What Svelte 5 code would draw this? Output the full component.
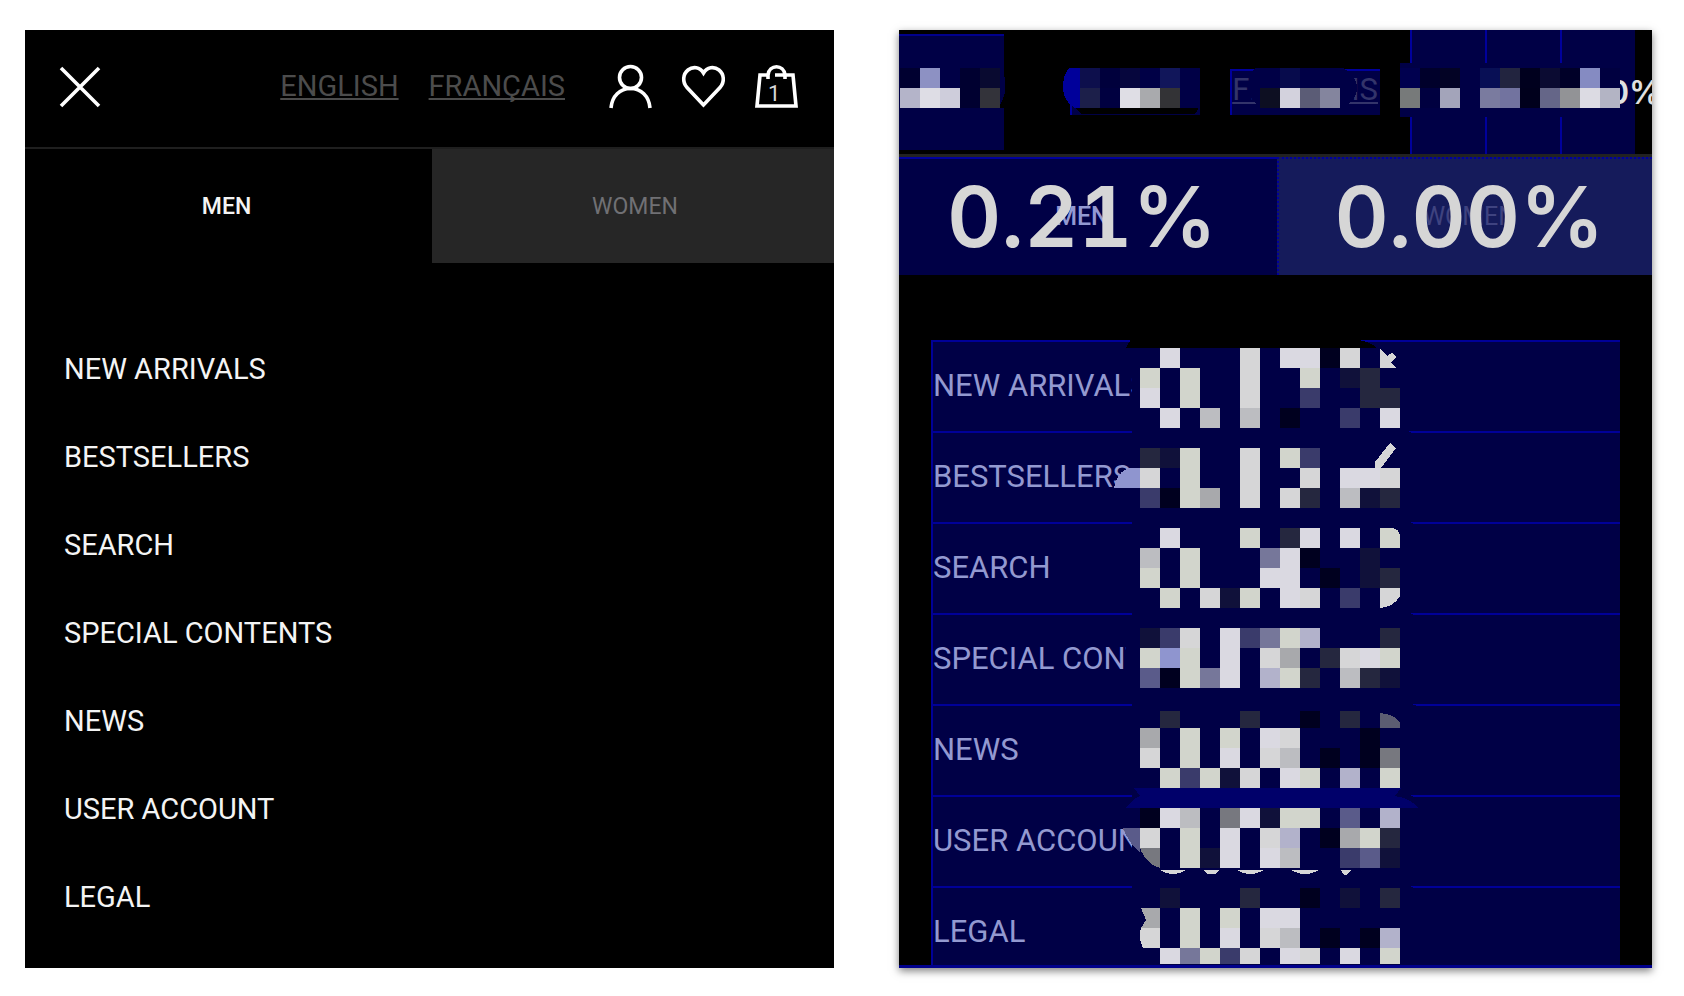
<script lang="ts">
	const links = ['NEW ARRIVALS', 'BESTSELLERS', 'SEARCH', 'SPECIAL CONTENTS', 'NEWS', 'USER ACCOUNT', 'LEGAL'];

	const CELL = 20;

	const palette: Record<string, string> = {
		W: '#dad9e1',
		G: '#d2d5cc',
		L: '#d6d6d7',
		S: '#bcbdc1',
		b: '#b2b2cb',
		a: '#a8a9ac',
		h: '#77787f',
		v: '#8f95cf',
		m: '#76779a',
		q: '#5a5b8a',
		p: '#3a3b6b',
		d: '#25273f',
		k: '#10113a',
		n: '#00001f'
	};

	// pixelated heat figures, 13 cells wide, one entry per cell row
	const rows = [
		{ y: 318, h: 20, cells: '.W...L.WWnL..' },
		{ y: 338, h: 20, cells: 'G.G..L..G.kd.' },
		{ y: 358, h: 20, cells: 'W.G..L..p..dd' },
		{ y: 378, h: 20, cells: '.W.S.S.n..p.W' },
		{ y: 418, h: 20, cells: 'dkG..L.Gp....' },
		{ y: 438, h: 20, cells: 'L.G..L..L.WWL' },
		{ y: 458, h: 20, cells: 'pnGa.L.Ld.Skd' },
		{ y: 498, h: 20, cells: '.W...G.dW.W..' },
		{ y: 518, h: 20, cells: 'S.G...mWn..k.' },
		{ y: 538, h: 20, cells: 'G.G...WW.n.kd' },
		{ y: 558, h: 20, cells: '.G.LkG.WL.p..' },
		{ y: 598, h: 20, cells: 'kpL.WpmGb...d' },
		{ y: 618, h: 20, cells: 'GvG.W.La.dLWG' },
		{ y: 638, h: 20, cells: 'qnGmW.bGd.Sdk' },
		{ y: 681, h: 17, cells: '.d...d..n.d..' },
		{ y: 698, h: 20, cells: 'a.G.G.WL...n.' },
		{ y: 718, h: 20, cells: 'L.G.W.LS.n.nh' },
		{ y: 738, h: 20, cells: '.GpGkL.WG.b.G' },
		{ y: 778, h: 20, cells: 'nWS.hWkGG.q.b' },
		{ y: 798, h: 20, cells: 'L.G.W.Lb.naGd' },
		{ y: 818, h: 20, cells: '..GkW.WS..pqk' },
		{ y: 858, h: 20, cells: '.k...d..n.k.d' },
		{ y: 878, h: 20, cells: '..G.G.WW.....' },
		{ y: 898, h: 20, cells: '..G.W.LS.n.nb' },
		{ y: 918, h: 16, cells: '.WmGpL.WL.W.G' }
	];

	const listCells = rows.flatMap((row) =>
		row.cells
			.split('')
			.map((c, i) => ({ x: 241 + i * CELL, y: row.y, h: row.h, fill: palette[c] }))
			.filter((cell) => cell.fill)
	);

	// header strips: two cell rows each
	const strips = [
		{
			x: 1,
			top: ['#000030', '#8d91c3', '#000046', '#000030', '#090a30'],
			bottom: ['#b4b4c9', '#dedde5', '#cecddb', '#000030', '#33333a']
		},
		{
			x: 181,
			top: ['#0d0f4c', '#00003c', '#06063d', '#000046', '#11165a', '#000046'],
			bottom: ['#1c1f4a', '#000040', '#dfdee5', '#a9aaad', '#333336', '#000046']
		},
		{
			x: 361,
			top: ['#000046', '#070b4c', '#000046', '#000046'],
			bottom: ['#0d0f22', '#d3d2dd', '#5b5c76', '#84859e']
		},
		{
			x: 501,
			top: ['#00004f', '#00002b', '#030325', '#000046', '#080f55', '#22243f', '#00001e', '#0b0b32', '#000028', '#858bc2', '#000040'],
			bottom: ['#777a7a', '#000040', '#a3a4ba', '#000046', '#7a7b9f', '#72739f', '#00001c', '#656688', '#929396', '#dcdbe3', '#b3b4c4']
		}
	];
</script>

<main class="page">
	<section class="panel">
		<header class="bar">
			<button class="icon" aria-label="Close menu">
				<svg width="40" height="40" viewBox="0 0 40 40"><path d="M1 1L39 39M39 1L1 39" /></svg>
			</button>
			<nav class="langs">
				<a href="#english">ENGLISH</a>
				<a href="#francais">FRANÇAIS</a>
			</nav>
			<div class="icons">
				<button class="icon" aria-label="Account">
					<svg width="43" height="43" viewBox="0 0 43 43">
						<circle cx="21.5" cy="12.5" r="11" />
						<path d="M2 43C3 31 11 23.5 21.5 23.5S40 31 41 43" />
					</svg>
				</button>
				<button class="icon" aria-label="Wishlist">
					<svg width="43" height="43" viewBox="0 0 43 43">
						<path d="M21.5 40L5 22.500C0 17 1 9 6 5C11 1 18 2 21.500 8C25 2 32 1 37 5C42 9 43 17 38 22.500Z" />
					</svg>
				</button>
				<button class="icon" aria-label="Shopping bag">
					<svg width="43" height="43" viewBox="0 0 43 43">
						<path d="M12 10H5L2 41H41L38 10H31M20 10H31" />
						<path d="M13 14V10C14 -1 29 -1 30 10V14" />
						<text x="13" y="36">1</text>
					</svg>
				</button>
			</div>
		</header>
		<div class="tabs">
			<button class="tab active">MEN</button>
			<button class="tab">WOMEN</button>
		</div>
		<ul class="menu">
			{#each links as link}
				<li><a href="#menu">{link}</a></li>
			{/each}
		</ul>
	</section>

	<section class="panel heat">
		<header class="bar">
			<div class="zone close"></div>
			<nav class="langs">
				<a href="#english">ENGLISH</a>
				<a href="#francais">FRANÇAIS</a>
			</nav>
			<div class="zones">
				<div class="zone"></div>
				<div class="zone"></div>
				<div class="zone last"><span>0%</span></div>
			</div>
		</header>
		<div class="tabs">
			<button class="tab active"><span>MEN</span><strong>0.21%</strong></button>
			<button class="tab"><span>WOMEN</span><strong>0.00%</strong></button>
		</div>
		<ul class="menu">
			{#each links as link}
				<li><a href="#menu">{link}</a></li>
			{/each}
		</ul>

		<svg class="mosaic" width="753" height="938" viewBox="0 0 753 938" aria-hidden="true">
			<!-- header -->
			<path class="base" d="M0 31H101Q106 38 106 58T101 78H0Z" />
			<path fill="#000" d="M106 38Q110 58 106 78L98 78Q106 70 106 58Z" />
			<path fill="#00009a" d="M181 38H170Q164 45 164 58T176 78H181Z" />
			<path fill="#000" d="M181 78H176L182 84H296L301 76V78Z" />
			<path class="base" d="M356 38Q350 46 350 58T362 78H444Q458 70 458 58T444 38Z" />
			<rect class="base" x="501" y="33" width="218" height="54" />
			{#each strips as strip}
				{#each strip.top as fill, i}
					<rect x={strip.x + i * CELL} y="38" width={CELL} height={CELL} {fill} />
				{/each}
				{#each strip.bottom as fill, i}
					<rect x={strip.x + i * CELL} y="58" width={CELL} height={CELL} {fill} />
				{/each}
			{/each}

			<!-- list -->
			<path class="base" d="M233 312H501V934H233Z" />
			<rect class="base" x="227" y="598" width="14" height="60" />
			{#each [403, 493, 584, 674, 766, 857] as y}
				<path class="base" d="M249 {y - 5}H501L523 {y + 4}L501 {y + 7}H249Z" />
			{/each}
			<path fill="#000" d="M227 318L232 309H446Q468 309 478 318Z" />
			<path fill="#00006a" d="M235 758H502L496 766Q512 768 519 778H227Q232 770 241 766Z" />
			<path fill={palette.v} d="M215 458Q218 442 230 438H241V458Z" />
			<path fill={palette.q} d="M224 798H241V822Q230 814 224 798Z" />
			{#each listCells as cell}
				<rect x={cell.x} y={cell.y} width={CELL} height={cell.h} fill={cell.fill} />
			{/each}
			<path fill={palette.L} d="M481 318L488 326L493 323L497 327L492 333L497 338H481Z" />
			<path fill={palette.L} d="M476 438V432L491 413L497 418L482 438Z" />
			<path fill={palette.G} d="M481 498H492Q501 498 501 508V518H481Z" />
			<path fill={palette.L} d="M481 558H501V566Q495 577 481 578Z" />
			<path fill="#5c5d72" d="M481 683Q494 684 501 692V698H481Z" />
			<path fill={palette.h} d="M241 818H261V838Q247 834 241 818Z" />
			<path fill={palette.L} d="M261 840H287Q274 848 261 840ZM305 840H320L317 844H308ZM338 840H365Q351 848 338 840ZM392 840H420Q406 848 392 840ZM442 840H452L448 845H445Z" />
			<path fill={palette.a} d="M242 878H261V898H242L247 890Z" />
			<path fill={palette.L} d="M242 898H261V918H244Q239 908 242 898Z" />
		</svg>
	</section>
</main>

<style>
	:global(body) {
		margin: 0;
		background: #fff;
	}

	.page {
		display: grid;
		grid-template-columns: 809fr 753fr;
		gap: 65px;
		padding: 30px 32px 28px 25px;
		font-family: Roboto, 'Liberation Sans', sans-serif;
	}

	.panel {
		display: flex;
		flex-direction: column;
		min-width: 0;
		background: #000;
		color: #f4f4f4;
	}

	button {
		margin: 0;
		padding: 0;
		border: 0;
		background: none;
		color: inherit;
		font: inherit;
		cursor: pointer;
	}

	.bar {
		display: flex;
		align-items: center;
		box-sizing: border-box;
		height: 119px;
		padding: 0 36px 4px 35px;
		border-bottom: 2px solid #1f1f1f;
	}

	.icon svg {
		display: block;
		overflow: visible;
		fill: none;
		stroke: #fff;
		stroke-width: 3.6;
	}

	.icon text {
		font-size: 22px;
		fill: #d8d8d8;
		stroke: none;
	}

	.langs {
		display: flex;
		gap: 30px;
		margin-left: auto;
		padding-bottom: 2px;
		font-size: 29px;
	}

	.langs a {
		color: #4c4c4c;
		text-decoration: underline 2px;
		text-underline-offset: 2px;
		text-decoration-skip-ink: none;
	}

	.icons {
		display: flex;
		gap: 30px;
		margin-left: 44px;
	}

	.tabs {
		display: grid;
		grid-template-columns: 407fr 402fr;
		height: 114px;
	}

	.tab {
		padding-left: 4px;
		background: #262626;
		color: #707074;
		font-size: 23px;
	}

	.tab.active {
		padding: 0 4px 0 0;
		background: #000;
		color: #f4f4f4;
		font-weight: 500;
	}

	.menu {
		list-style: none;
		margin: 0;
		padding: 62px 39px 27px;
		font-size: 29px;
		line-height: 88px;
	}

	.menu a {
		color: inherit;
		text-decoration: none;
		white-space: nowrap;
	}

	.heat {
		position: relative;
		overflow: hidden;
		border-bottom: 3px solid #00008c;
		box-shadow: 0 3px 8px rgba(0, 0, 0, 0.5);
	}

	.heat .bar {
		flex: none;
		height: 127px;
		padding: 0 17px 0 0;
		border-bottom: 3px solid #222;
	}

	.zone {
		box-sizing: border-box;
		width: 75px;
		background: #000046;
		border-left: 2px solid #00009c;
	}

	.zone.close {
		width: 105px;
		height: 116px;
		border-left: 0;
		border-top: 2px solid #00008c;
	}

	.zones {
		display: flex;
		align-self: stretch;
		margin-left: 30px;
	}

	.zone.last {
		display: flex;
		align-items: center;
		padding-left: 46px;
		color: #e0e0e0;
		font: 600 32px Inter, sans-serif;
	}

	.heat .langs {
		padding: 0;
		font-size: 31px;
		line-height: 38px;
	}

	.heat .langs a {
		padding: 0 2px 6px 0;
		background: #000046;
		border-top: 2px solid #00009c;
		border-left: 2px solid #00009c;
		color: #33346a;
	}

	.heat .tabs {
		flex: none;
		grid-template-columns: 378fr 375fr;
		height: 118px;
	}

	.heat .tab {
		display: grid;
		place-items: center;
		padding: 0 0 2px 8px;
		background: #151b5b;
		border-top: 2px dotted #00009c;
		border-left: 2px dotted #00009c;
		color: #3f4380;
		font-size: 25px;
	}

	.heat .tab.active {
		padding: 0 12px 2px 0;
		background: #000046;
		border-top-style: solid;
		border-left: 0;
		color: #9298d2;
	}

	.tab span,
	.tab strong {
		grid-area: 1 / 1;
	}

	.tab strong {
		color: #d6d6d6;
		font: 600 84px Inter, sans-serif;
		font-variant-numeric: tabular-nums;
	}

	.heat .menu {
		flex: 1 1 0;
		min-height: 0;
		overflow: hidden;
		margin: 65px 32px 0;
		padding: 0;
		background: #000046;
		border-left: 2px solid #000098;
		color: #9399d0;
		font-size: 31px;
		line-height: 87px;
	}

	.heat .menu li {
		box-sizing: border-box;
		height: 91px;
		border-top: 2px solid #000098;
	}

	.mosaic {
		position: absolute;
		top: 0;
		left: 0;
		shape-rendering: crispEdges;
	}

	.mosaic .base {
		fill: #000046;
	}
</style>
